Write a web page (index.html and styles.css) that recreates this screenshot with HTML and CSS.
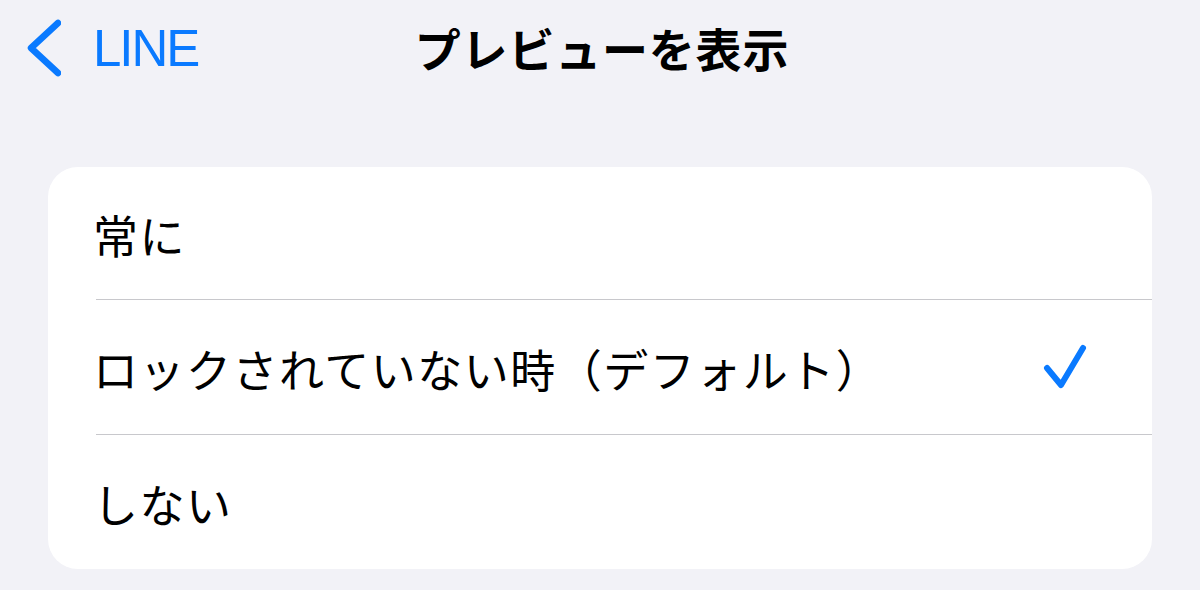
FILE: index.html
```html
<!DOCTYPE html>
<html lang="ja">
<head>
<meta charset="utf-8">
<link rel="stylesheet" href="styles.css">
</head>
<body>
<div class="page">
  <header class="nav">
    <div class="back">
      <svg class="chev" width="40" height="60" viewBox="0 0 40 60">
        <path d="M37 5 L10 30 L37 55" fill="none" stroke="#0a7aff" stroke-width="6.5" stroke-linecap="round" stroke-linejoin="round"/>
      </svg>
      <span class="back-label">LINE</span>
    </div>
    <h1 class="title">プレビューを表示</h1>
  </header>
  <section class="card">
    <div class="row"><span class="label">常に</span></div>
    <div class="row"><span class="label">ロックされていない時（デフォルト）</span>
      <svg class="check" width="50" height="50" viewBox="0 0 50 50">
        <path d="M7 25 L21 42 L43 5" fill="none" stroke="#0a7aff" stroke-width="6" stroke-linecap="round" stroke-linejoin="round"/>
      </svg>
    </div>
    <div class="row"><span class="label">しない</span></div>
  </section>
</div>
</body>
</html>
```
FILE: styles.css
```css
html, body {
  margin: 0;
  padding: 0;
  background: #f2f2f7;
}
body {
  font-family: "Noto Sans CJK JP", "Noto Sans", sans-serif;
  color: #000;
  width: 1200px;
  height: 590px;
  overflow: hidden;
}
.page {
  display: flex;
  flex-direction: column;
  padding: 0 48px;
}
.nav {
  position: relative;
  height: 94px;
  display: flex;
  align-items: center;
  justify-content: center;
}
.back {
  position: absolute;
  left: -27px;
  top: 0;
  height: 94px;
  display: flex;
  align-items: center;
  color: #0a7aff;
}
.chev {
  margin-top: 2px;
}
.back-label {
  font-family: "Liberation Sans", "Noto Sans", sans-serif;
  font-size: 51px;
  margin-left: 32px;
  margin-top: 2px;
  letter-spacing: -2px;
}
.title {
  margin: 0;
  font-size: 46px;
  font-weight: 700;
  letter-spacing: 0.8px;
  line-height: 1;
  margin-left: 4px;
}
.card {
  margin-top: 73px;
  background: #fff;
  border-radius: 30px;
  display: flex;
  flex-direction: column;
  overflow: hidden;
}
.row {
  height: 133px;
  margin-left: 48px;
  padding-right: 62px;
  display: flex;
  align-items: center;
  justify-content: space-between;
  border-bottom: 1.5px solid #c8c8cc;
  box-sizing: border-box;
}
.row:nth-child(2) {
  height: 135px;
}
.row:last-child {
  border-bottom: none;
  height: 134px;
}
.label {
  font-size: 45px;
  line-height: 1;
  letter-spacing: 1.5px;
  margin-left: -3px;
  margin-top: 3px;
}
.check {
  margin-top: 2px;
}
```
